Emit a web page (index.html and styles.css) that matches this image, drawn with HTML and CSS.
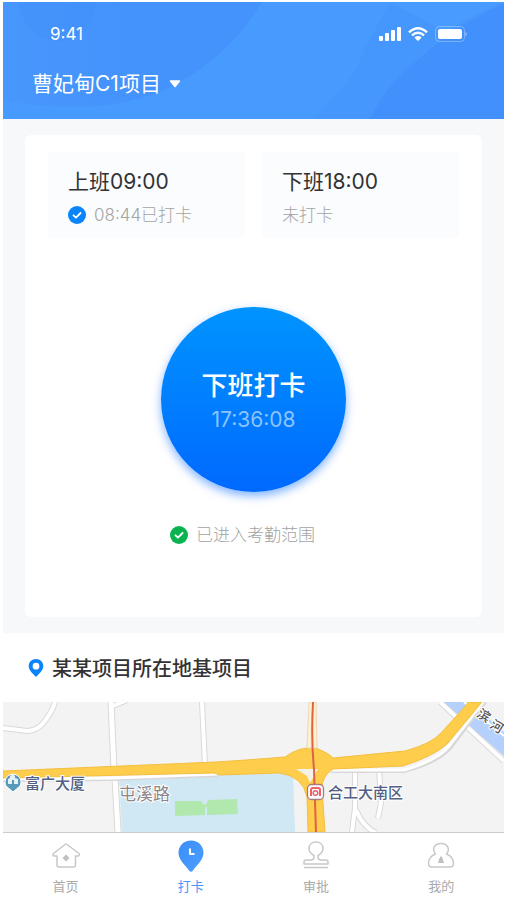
FILE: index.html
```html
<!DOCTYPE html>
<html lang="zh-CN">
<head>
<meta charset="utf-8">
<meta name="viewport" content="width=device-width, initial-scale=1">
<title>考勤打卡</title>
<link rel="stylesheet" href="styles.css">
</head>
<body>
<div class="app">
  <header class="header">
    <svg class="header-art" viewBox="3 2 501 117" preserveAspectRatio="none" aria-hidden="true">
      <defs>
        <linearGradient id="ray" x1="0" y1="0" x2="1" y2="0"><stop offset="0" stop-color="#4897fd"/><stop offset=".5" stop-color="#4492fc"/><stop offset="1" stop-color="#4492fc"/></linearGradient>
      </defs>
      <path d="M3 2H262C242 35 215 62 180 82C135 108 75 112 3 101V2Z" fill="url(#ray)"/>
      <path d="M19 2C20 22 31 36 58 42C80 42 95 25 96 2Z" fill="#3f8ffa" opacity=".35"/>
      <path d="M504 4C465 20 435 43 404 72C387 88 378 103 370 119H504Z" fill="#4190fb"/>
      <path d="M312 119C338 93 357 75 365 48L390 2H480L504 4C465 20 435 43 404 72C387 88 378 103 370 119Z" fill="#4494fd" opacity=".6"/>
      <path d="M390 2H504C480 12 465 20 446 32C425 20 405 10 390 2Z" fill="#4ba0ff" opacity=".6"/>
    </svg>
    <div class="status">
      <span class="clock">9:41</span>
      <svg class="signals" width="90" height="18" viewBox="0 0 90 18" aria-label="信号、无线网络、电量" role="img">
        <g fill="#fff">
          <rect x="1" y="11" width="4" height="5" rx="1"/><rect x="7" y="8" width="4" height="8" rx="1"/><rect x="13" y="5" width="4" height="11" rx="1"/><rect x="19" y="2" width="4" height="14" rx="1"/>
          <path d="M36.500 12.200Q40 9.600 43.500 12.200Q43.200 13.200 40 16Q36.800 13.200 36.500 12.200Z"/>
          <rect x="60" y="4" width="24" height="10" rx="2"/>
          <path d="M87.500 6.500Q90 9 87.500 11.500Z" opacity=".5"/>
        </g>
        <g fill="none" stroke="#fff">
          <path d="M31 7.300Q40 -1 49 7.300M34 10.400Q40 5 46 10.400" stroke-width="2.400"/>
          <rect x="57.500" y="1.500" width="29" height="15" rx="4" opacity=".3"/>
        </g>
      </svg>
    </div>
    <button class="project" type="button">曹妃甸C1项目
      <svg width="12" height="8" viewBox="0 0 12 8" aria-hidden="true"><path d="M1.500 1H10.500L6 6.500Z" fill="#fff" stroke="#fff" stroke-width="1.500" stroke-linejoin="round"/></svg>
    </button>
  </header>

  <main>
    <div class="backdrop">
      <section class="card">
        <div class="shifts">
          <div class="shift">
            <h2>上班09:00</h2>
            <p><svg class="tick" viewBox="0 0 18 18" aria-hidden="true"><circle cx="9" cy="9" r="9" fill="#0a84fb"/><path d="M5.500 9.300L8 11.700L12.600 7" fill="none" stroke="#fff" stroke-width="1.800" stroke-linecap="round" stroke-linejoin="round"/></svg>08:44已打卡</p>
          </div>
          <div class="shift">
            <h2>下班18:00</h2>
            <p>未打卡</p>
          </div>
        </div>
        <button class="punch" type="button">
          <span class="punch-title">下班打卡</span>
          <span class="punch-time">17:36:08</span>
        </button>
        <p class="range"><svg class="tick" viewBox="0 0 18 18" aria-hidden="true"><circle cx="9" cy="9" r="9" fill="#09b34f"/><path d="M5.500 9.300L8 11.700L12.600 7" fill="none" stroke="#fff" stroke-width="1.800" stroke-linecap="round" stroke-linejoin="round"/></svg>已进入考勤范围</p>
      </section>
    </div>

    <div class="place">
      <svg width="16" height="20" viewBox="0 0 16 20" aria-hidden="true"><path fill-rule="evenodd" fill="#0a84fb" d="M8 1C3.800 1 .7 4.100 .7 8.100C.7 12.500 5 16 8 19C11 16 15.300 12.500 15.300 8.100C15.300 4.100 12.200 1 8 1ZM8 4.800A3.400 3.400 0 1 1 8 11.600A3.400 3.400 0 0 1 8 4.800Z"/></svg>
      <h2>某某项目所在地基项目</h2>
    </div>

    <svg class="map" viewBox="3 702 501 130" preserveAspectRatio="xMidYMid slice" role="img" aria-label="地图">
      <rect x="3" y="702" width="501" height="130" fill="#f3f3f3"/>
      <path d="M119 778L217 774L293 773L295 832H122Z" fill="#d0e7f4"/>
      <path d="M442 702H470L504 732V756Z" fill="#b5d0fc"/>
      <g fill="none" stroke="#d9d9d9" stroke-width="6">
        <path d="M3 728L27 731Q39 731 47 718Q53 710 55 702"/>
        <path d="M111 702L114 769M115 778L118 832" stroke-width="7"/>
        <path d="M113 706L127 700"/>
        <path d="M202 702L205 766"/>
        <path d="M355 768V808L352 832M356 810Q363 827 376 833"/>
        <path d="M379 768L381 803L378 818"/>
        <path d="M440 702L504 761"/>
      </g>
      <g fill="none" stroke="#fff" stroke-width="4">
        <path d="M3 728L27 731Q39 731 47 718Q53 710 55 702"/>
        <path d="M111 702L114 769M115 778L118 832" stroke-width="5"/>
        <path d="M113 706L127 700"/>
        <path d="M202 702L205 766"/>
        <path d="M355 768V808L352 832M356 810Q363 827 376 833"/>
        <path d="M379 768L381 803L378 818"/>
        <path d="M440 702L504 761"/>
        <path d="M464 702L504 736" stroke-width="2"/>
      </g>
      <path d="M3 780L113 779L218 775M331 771H404Q438 762 450 748L485 702" fill="none" stroke="#d8d8d8" stroke-width="4"/>
      <path d="M3 779L113 778L217 774M331 770H404Q438 760 449 746L483 702" fill="none" stroke="#fff" stroke-width="3"/>
      <path d="M3 771L216 762L246 760L285 757Q300 746 316 748Q330 754 333 758L405 751Q431 744 441 733L469 702H482Q464 724 447 744Q434 756 403 766L333 769Q322 776 322 788L325 832H308L307 797Q303 776 279 773L220 775L214 773L3 778Z" fill="#fecd4b" stroke="#f3bf3f" stroke-width="1"/>
      <path d="M309 702L307 748H317L316 702Z" fill="#fff1cd" stroke="#ead9b4" stroke-width="1"/>
      <path d="M296 769H318L310 783L307 776Z" fill="#f4f1e8"/>
      <path d="M313 702Q311 740 314 769L316 832" fill="none" stroke="#dc6249" stroke-width="2"/>
      <path d="M175 801H201Q205 809 208 800L237 799L238 814L175 816Z" fill="#b1e8ae"/>
      <path d="M206 807V816" stroke="#d0e7f4" stroke-width="2"/>
      <path d="M13 792L6 786A8 8 0 1 1 20 786Z" fill="#579abc" stroke="#fff" stroke-width="1"/>
      <path d="M8 784V779L10 778V776L13 774L15 776V778L18 779V784H14V780H12V784Z" fill="#e4f2f8"/>
      <rect x="307.500" y="784.500" width="16" height="15" rx="4" fill="#fff" stroke="#a77c80" stroke-width="1.300"/>
      <path d="M311 796V790Q311 788 313 788H318Q320 788 320 790V796" fill="none" stroke="#ed6268" stroke-width="2"/>
      <circle cx="315.500" cy="793" r="2.300" fill="none" stroke="#ed6268" stroke-width="1.500"/>
      <g class="map-label">
        <text x="25" y="789">富广大厦</text>
        <text x="328" y="798">合工大南区</text>
        <text class="road" x="119" y="800">屯溪路</text>
        <g class="river"><text transform="translate(476 716) rotate(32)">滨</text><text transform="translate(489 727) rotate(32)">河</text></g>
      </g>
    </svg>
  </main>

  <nav class="tabs" aria-label="主导航">
    <a href="#home"><svg viewBox="0 0 32 34" aria-hidden="true"><path d="M15 5.500Q16 4.500 17 5.500L29 14.500Q30 16 28.500 17H25.500V26Q25.500 28 23.500 28H9Q7 28 7 26V17H4Q2 16 3.500 14.500Z"/><path class="solid" d="M16 15.500L19.500 19L16 22.500L12.500 19Z"/></svg>首页</a>
    <a class="active" href="#punch" aria-current="page"><svg viewBox="0 0 32 34" aria-hidden="true"><defs><linearGradient id="pin" x2="1" y2="1"><stop stop-color="#3a8ef8"/><stop offset="1" stop-color="#4d9fff"/></linearGradient></defs><path class="pin" fill="url(#pin)" d="M16 1.500C8.700 1.500 3.500 7 3.500 13.700C3.500 21 10 25.500 14 31.500Q16 34 18 31.500C22 25.500 28.500 21 28.500 13.700C28.500 7 23.300 1.500 16 1.500Z"/><path class="hands" d="M15 9.500V15H19.500"/></svg>打卡</a>
    <a href="#approve"><svg viewBox="0 0 32 34" aria-hidden="true"><path d="M14 16.500C10.500 14.500 9 12.500 9 9.500C9 5.500 12 3 16 3S23 5.500 23 9.500C23 12.500 21.500 14.500 18 16.500V18Q18 21 21 21H26Q28 21 28 23V25H4V23Q4 21 6 21H11Q14 21 14 18ZM4 28.500H28"/></svg>审批</a>
    <a href="#mine"><svg viewBox="0 0 32 34" aria-hidden="true"><path d="M10.500 15C6.500 10 9.500 4.500 16 4.500S25.500 10 21.500 15C26.500 17 28.500 21 28.500 24.500Q28.500 28 25 28H7Q3.500 28 3.500 24.500C3.500 21 5.500 17 10.500 15Z"/><path class="solid" d="M16 17L17.500 19L19 24H13L14.500 19Z"/></svg>我的</a>
  </nav>
</div>
</body>
</html>
```
FILE: styles.css
```css
* {
  box-sizing: border-box;
}

body {
  margin: 0;
  background: #fff;
  color: #333;
  font-family: Inter, "Noto Sans CJK SC", sans-serif;
}

h2,
p {
  margin: 0;
  font-weight: 400;
}

button {
  border: 0;
  font: inherit;
  cursor: pointer;
}

.app {
  display: flex;
  flex-direction: column;
  min-height: 100vh;
  padding: 2px 3px 0;
}

.header {
  position: relative;
  padding: 20px 32px 20px 29px;
  background: #489bfe;
  color: #fff;
}

.header-art {
  position: absolute;
  inset: 0;
  width: 100%;
  height: 100%;
}

.status {
  position: relative;
  display: flex;
  align-items: center;
  justify-content: space-between;
  height: 24px;
  padding: 0 4px 0 18px;
}

.clock {
  font-size: 17px;
}

.project {
  position: relative;
  display: flex;
  align-items: center;
  gap: 8px;
  margin-top: 22px;
  padding: 0;
  background: none;
  color: #fff;
  font-size: 21px;
  line-height: 31px;
}

.backdrop {
  padding: 16px 22px;
  background: #f6f8f9;
}

.card {
  display: flex;
  flex-direction: column;
  align-items: center;
  padding: 17px 23px 69px;
  border-radius: 6px;
  background: #fff;
}

.shifts {
  display: grid;
  grid-template-columns: 1fr 1fr;
  gap: 17px;
  width: 100%;
}

.shift {
  padding: 14px 20px 10px;
  border-radius: 4px;
  background: #fafcfd;
}

.shift h2 {
  margin-bottom: 4px;
  font-size: 21px;
  line-height: 32px;
}

.shift p,
.range {
  display: flex;
  align-items: center;
  gap: 8px;
  color: #a4a4a4;
  font-size: 17px;
  font-weight: 300;
  line-height: 26px;
}

.range {
  padding-right: 22px;
}

.tick {
  flex: none;
  width: 18px;
  height: 18px;
}

.punch {
  display: flex;
  flex-direction: column;
  align-items: center;
  justify-content: center;
  width: 185px;
  height: 185px;
  margin: 69px 0 30px;
  padding: 4px 0 0;
  border-radius: 50%;
  background: linear-gradient(#0094ff, #0069ff);
  box-shadow: 0 4px 10px #0069ff80;
  color: #fff;
}

.punch-title {
  font-size: 26px;
  font-weight: 500;
  line-height: 36px;
}

.punch-time {
  color: #8cc4ff;
  font-size: 21px;
  line-height: 32px;
}

.place {
  display: flex;
  align-items: center;
  gap: 8px;
  height: 69px;
  padding: 0 25px;
}

.place h2 {
  font-size: 20px;
  font-weight: 500;
}

.map {
  display: block;
  width: 100%;
  border-bottom: 1px solid #ccc;
}

.map-label {
  fill: #526083;
  stroke: #fff;
  stroke-width: 2px;
  paint-order: stroke;
  font-size: 15px;
  font-weight: 500;
}

.map-label .road {
  fill: #8b8588;
  font-size: 17px;
  font-weight: 400;
}

.map-label .river {
  fill: #555;
  font-size: 13px;
}

.tabs {
  display: grid;
  grid-template-columns: repeat(4, 1fr);
  padding-top: 6px;
}

.tabs a {
  display: flex;
  flex-direction: column;
  align-items: center;
  gap: 3px;
  color: #aaa;
  font-size: 13px;
  line-height: 20px;
  text-decoration: none;
}

.tabs svg {
  width: 32px;
  height: 34px;
  fill: none;
  stroke: #c8c8c8;
  stroke-width: 1.5px;
  stroke-linejoin: round;
}

.tabs .solid {
  fill: #c0c0c0;
  stroke: none;
}

.tabs .active {
  color: #4597fb;
}

.tabs .pin {
  stroke: none;
}

.tabs .hands {
  stroke: #fff;
  stroke-width: 2px;
}
```
